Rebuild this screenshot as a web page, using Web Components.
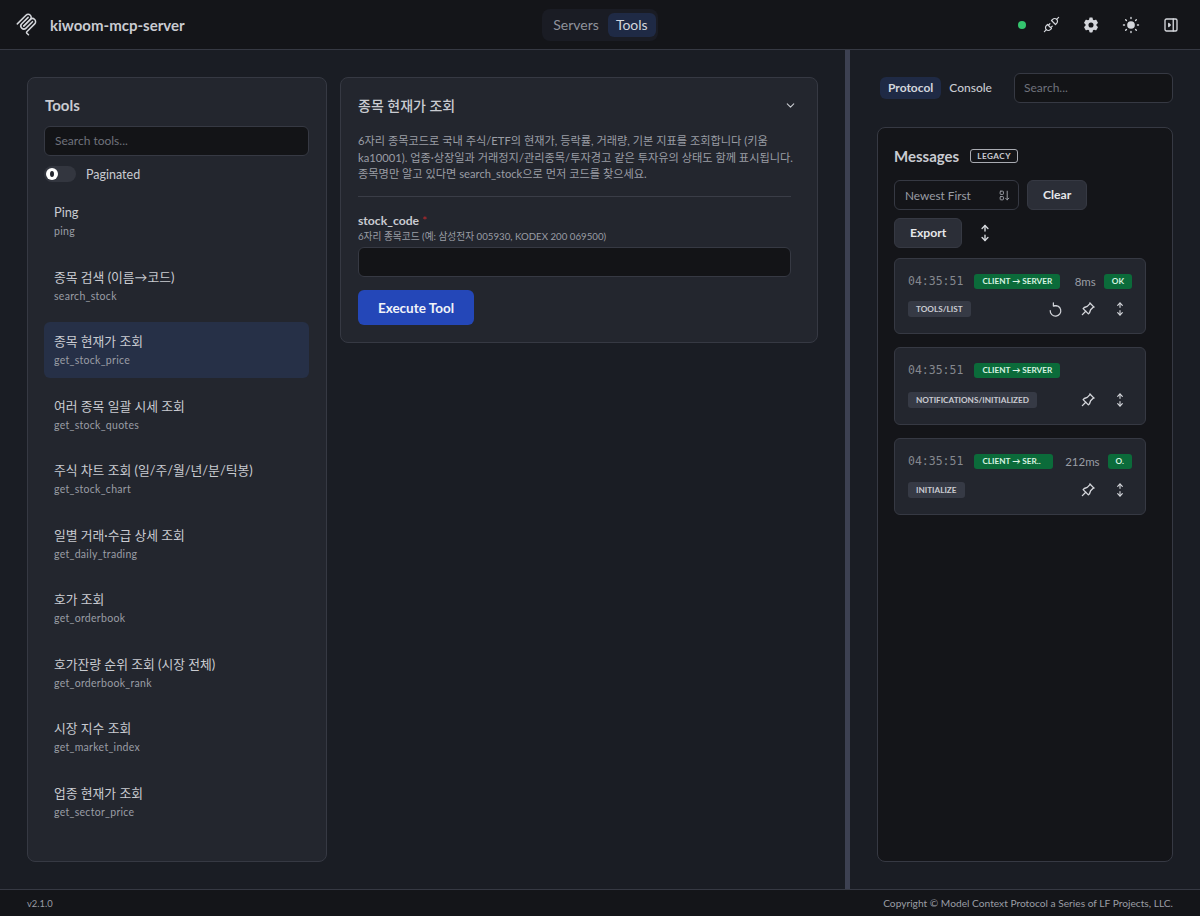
<!doctype html>
<html lang="ko">
<head>
<meta charset="utf-8">
<title>kiwoom-mcp-server</title>
<style>
  html, body { margin: 0; height: 100%; background: #1a1d24; }
  body {
    font-family: Lato, "Noto Sans CJK KR", sans-serif;
    color: #c9cbd1;
    overflow: hidden;
  }
</style>
</head>
<body>
<app-shell>
  <app-header slot="header"></app-header>

  <tools-panel slot="tools">
    <tool-item code="ping">Ping</tool-item>
    <tool-item code="search_stock">종목 검색 (이름→코드)</tool-item>
    <tool-item code="get_stock_price" selected>종목 현재가 조회</tool-item>
    <tool-item code="get_stock_quotes">여러 종목 일괄 시세 조회</tool-item>
    <tool-item code="get_stock_chart">주식 차트 조회 (일/주/월/년/분/틱봉)</tool-item>
    <tool-item code="get_daily_trading">일별 거래·수급 상세 조회</tool-item>
    <tool-item code="get_orderbook">호가 조회</tool-item>
    <tool-item code="get_orderbook_rank">호가잔량 순위 조회 (시장 전체)</tool-item>
    <tool-item code="get_market_index">시장 지수 조회</tool-item>
    <tool-item code="get_sector_price">업종 현재가 조회</tool-item>
  </tools-panel>

  <tool-detail slot="detail"></tool-detail>

  <protocol-panel slot="side">
    <message-card style="--row-gap:12px" time="04:35:51" direction="CLIENT → SERVER" ms="8ms" status="OK" method="TOOLS/LIST" replay></message-card>
    <message-card style="--row-gap:14px" time="04:35:51" direction="CLIENT → SERVER" method="NOTIFICATIONS/INITIALIZED"></message-card>
    <message-card style="--row-gap:13px;--dir-w:79px" time="04:35:51" direction="CLIENT → SER.." ms="212ms" status="O." method="INITIALIZE"></message-card>
  </protocol-panel>

  <app-footer slot="footer"></app-footer>
</app-shell>

<script>
const ICONS = {
  plug: '<path d="M7 12l5 5l-1.5 1.5a3.536 3.536 0 1 1 -5 -5l1.5 -1.5z"/><path d="M17 12l-5 -5l1.5 -1.5a3.536 3.536 0 1 1 5 5l-1.5 1.5z"/><path d="M3 21l2.5 -2.5"/><path d="M18.5 5.5l2.5 -2.5"/><path d="M10 11l-2 2"/><path d="M13 14l-2 2"/>',
  gear: '<path fill="currentColor" stroke="none" fill-rule="evenodd" d="M14.1 2.6l.5 2.3c.5.2 1 .5 1.4.8l2.2-.7c.4-.1.8 0 1 .4l1.9 3.2c.2.4.1.8-.2 1.1l-1.7 1.5c.1.5.1 1.1 0 1.6l1.7 1.5c.3.3.4.7.2 1.1l-1.9 3.2c-.2.4-.6.5-1 .4l-2.2-.7c-.4.3-.9.6-1.4.8l-.5 2.3c-.1.4-.4.6-.8.6h-2.6c-.4 0-.7-.2-.8-.6l-.5-2.3c-.5-.2-1-.5-1.4-.8l-2.2.7c-.4.1-.8 0-1-.4l-1.9-3.2c-.2-.4-.1-.8.2-1.1l1.7-1.5c-.1-.5-.1-1.1 0-1.6l-1.7-1.5c-.3-.3-.4-.7-.2-1.1l1.9-3.2c.2-.4.6-.5 1-.4l2.2.7c.4-.3.9-.6 1.4-.8l.5-2.3c.1-.4.4-.6.8-.6h2.6c.4 0 .7.2.8.6zM12 8.6a3.4 3.4 0 1 0 0 6.8a3.4 3.4 0 0 0 0-6.8z"/>',
  sun: '<circle cx="12" cy="12" r="4.6" fill="currentColor" stroke="none"/><path d="M3 12h1.2M19.8 12h1.2M12 3v1.2M12 19.8v1.2M5.6 5.6l.9.9M18.4 5.6l-.9.9M17.5 17.5l.9.9M6.5 17.5l-.9.9"/>',
  sidebar: '<rect x="4" y="4" width="16" height="16" rx="2"/><path d="M15 4v16"/><path d="M9 10l2 2l-2 2z" fill="currentColor"/>',
  chevron: '<path d="M6 9l6 6l6 -6"/>',
  sort: '<rect x="4" y="4" width="6" height="6" rx="1.2"/><rect x="4" y="14" width="6" height="6" rx="1.2"/><path d="M17 4v16"/><path d="M14 17l3 3l3 -3"/>',
  fold: '<path d="M12 3v6.5"/><path d="M8.5 6.5l3.5 -3.5l3.5 3.5"/><path d="M12 14.5v6.5"/><path d="M8.5 17.5l3.5 3.5l3.5 -3.5"/>',
  replay: '<path d="M9.2 6.9A7.5 7.5 0 1 1 4.5 13.5"/><path d="M9 2.5v4.5h4.5"/>',
  pin: '<path d="M15 4.5l-4 4l-4 1.5l-1.5 1.5l7 7l1.5 -1.5l1.5 -4l4 -4"/><path d="M9 15l-4.5 4.5"/><path d="M14.5 4l5.5 5.5"/>'
};

class UiIcon extends HTMLElement {
  connectedCallback() {
    const size = this.getAttribute('size') || 20;
    const sw = this.getAttribute('stroke') || 2;
    this.attachShadow({ mode: 'open' }).innerHTML = `
      <style>:host{display:inline-flex;flex:none;align-items:center;justify-content:center}svg{display:block}</style>
      <svg width="${size}" height="${size}" viewBox="0 0 24 24" fill="none" stroke="currentColor" stroke-width="${sw}" stroke-linecap="round" stroke-linejoin="round">${ICONS[this.getAttribute('name')]}</svg>`;
  }
}
customElements.define('ui-icon', UiIcon);

class AppShell extends HTMLElement {
  constructor() {
    super();
    this.attachShadow({ mode: 'open' }).innerHTML = `
      <style>
        :host{display:grid;grid-template-rows:50px 1fr 27px;height:916px;width:1200px}
        main{display:grid;grid-template-columns:845px 5px 350px;min-height:0}
        #left{display:grid;grid-template-columns:300px 478px;column-gap:13px;padding:27px;box-sizing:border-box;align-items:start;min-height:0;grid-template-rows:785px}
        #bar{background:#3d4152}
      </style>
      <slot name="header"></slot>
      <main>
        <div id="left"><slot name="tools"></slot><slot name="detail"></slot></div>
        <div id="bar"></div>
        <slot name="side"></slot>
      </main>
      <slot name="footer"></slot>`;
  }
}
customElements.define('app-shell', AppShell);

class AppHeader extends HTMLElement {
  constructor() {
    super();
    this.attachShadow({ mode: 'open' }).innerHTML = `
      <style>
        :host{display:grid;grid-template-columns:1fr auto 1fr;align-items:center;background:#141519;border-bottom:1px solid #363943;box-sizing:border-box;padding:0 19px}
        #brand{display:flex;align-items:center;gap:12px;margin-left:-4px;font-size:15px;font-weight:700;color:#c9cbd1}
        nav{display:flex;background:#1a1c24;border-radius:8px;padding:4px 2px 4px 3px;font-size:14px}
        nav span{padding:0 8px;height:24px;line-height:24px;border-radius:6px;color:#8f929b}
        nav span.on{background:#1f2a45;color:#d3d6dd;margin-left:1px}
        #actions{display:flex;justify-self:end;align-items:center;color:#d4d6db}
        #dot{width:8px;height:8px;border-radius:50%;background:#34c46e;margin-right:15px}
        #actions ui-icon{width:20px;margin-left:20px}
        #actions ui-icon:first-of-type{margin-left:0}
      </style>
      <div id="brand">
        <svg width="23" height="23" viewBox="0 0 180 180" fill="none" stroke="#d4d6db" stroke-width="12" stroke-linecap="round">
          <path d="M18 84.8528L85.8822 16.9706C95.2548 7.59798 110.451 7.59798 119.823 16.9706C129.196 26.3431 129.196 41.5391 119.823 50.9117L68.5581 102.177"/>
          <path d="M69.2652 101.47L119.823 50.9117C129.196 41.5391 144.392 41.5391 153.765 50.9117L154.118 51.2652C163.491 60.6378 163.491 75.8338 154.118 85.2063L92.7248 146.6C89.6006 149.724 89.6006 154.789 92.7248 157.913L105.331 170.52"/>
          <path d="M102.853 33.9411L52.6482 84.1457C43.2756 93.5183 43.2756 108.714 52.6482 118.087C62.0208 127.459 77.2167 127.459 86.5893 118.087L136.794 67.8822"/>
        </svg>
        <span>kiwoom-mcp-server</span>
      </div>
      <nav><span>Servers</span><span class="on">Tools</span></nav>
      <div id="actions">
        <div id="dot"></div>
        <ui-icon name="plug" size="19" stroke="1.5"></ui-icon>
        <ui-icon name="gear" size="18"></ui-icon>
        <ui-icon name="sun" size="20" stroke="1.7"></ui-icon>
        <ui-icon name="sidebar" size="18" stroke="1.8"></ui-icon>
      </div>`;
  }
}
customElements.define('app-header', AppHeader);

class ToolsPanel extends HTMLElement {
  constructor() {
    super();
    this.attachShadow({ mode: 'open' }).innerHTML = `
      <style>
        :host{display:block;height:785px;box-sizing:border-box;background:#23262e;border:1px solid #363943;border-radius:8px;padding:16px 17px 16px 16px}
        h2{margin:0 0 10px;font-size:15px;line-height:22px;font-weight:700;color:#c9cbd1;padding-left:1px}
        #search{box-sizing:border-box;height:30px;background:#131417;border:1px solid #363943;border-radius:6px;padding:0 10px;line-height:28px;font-size:12px;color:#6f727b}
        #toggle{display:flex;align-items:center;gap:10px;margin:10px 0 11px;font-size:12.5px;height:16px;color:#c9cbd1}
        #track{width:32px;height:16px;border-radius:8px;background:#33363f;position:relative}
        #thumb{position:absolute;left:2px;top:2px;width:12px;height:12px;border-radius:50%;background:#fff;box-sizing:border-box;display:flex;align-items:center;justify-content:center}
        #thumb::after{content:"";width:4px;height:6px;border-radius:50%;background:#23262e}
        #list{display:flex;flex-direction:column;gap:8.5px}
      </style>
      <h2>Tools</h2>
      <div id="search">Search tools...</div>
      <div id="toggle"><div id="track"><div id="thumb"></div></div><span>Paginated</span></div>
      <div id="list"><slot></slot></div>`;
  }
}
customElements.define('tools-panel', ToolsPanel);

class ToolItem extends HTMLElement {
  constructor() {
    super();
    this.attachShadow({ mode: 'open' }).innerHTML = `
      <style>
        :host{display:block;height:56px;box-sizing:border-box;border-radius:6px;padding:10px}
        :host([selected]){background:#263047}
        #name{font-size:12.8px;line-height:19px;color:#c9cbd1}
        #code{font-size:10.5px;letter-spacing:.3px;line-height:14px;margin-top:2px;color:#9a9da5}
      </style>
      <div id="name"><slot></slot></div>
      <div id="code"></div>`;
  }
  connectedCallback() {
    this.shadowRoot.querySelector('#code').textContent = this.getAttribute('code');
  }
}
customElements.define('tool-item', ToolItem);

class ToolDetail extends HTMLElement {
  constructor() {
    super();
    this.attachShadow({ mode: 'open' }).innerHTML = `
      <style>
        :host{display:block;box-sizing:border-box;height:266px;background:#23262e;border:1px solid #363943;border-radius:8px;padding:16px 26px 16px 17px}
        #head{display:flex;justify-content:space-between;align-items:center;height:22px;color:#c9cbd1}
        #head ui-icon{margin-right:-6px}
        h2{margin:0;font-size:14px;font-weight:500}
        p{margin:17px 0 0;font-size:11.2px;line-height:16.7px;color:#9a9da5;height:51px;white-space:nowrap}
        hr{border:0;border-top:1px solid #3a3d47;margin:12px 0 0}
        label{display:block;margin-top:16px;font-size:12.2px;line-height:15px;font-weight:700;color:#c9cbd1}
        label b{color:#b3282d;font-weight:400}
        small{display:block;margin-top:1px;font-size:9.7px;line-height:14px;color:#9a9da5}
        #input{height:30px;margin-top:4px;box-sizing:border-box;background:#131417;border:1px solid #363943;border-radius:6px}
        button{display:block;margin-top:13px;width:116px;height:35px;border:0;border-radius:6px;background:#2447b8;color:#f1f3f8;font:700 13.5px Lato,sans-serif}
      </style>
      <div id="head"><h2>종목 현재가 조회</h2><ui-icon name="chevron" size="13"></ui-icon></div>
      <p>6자리 종목코드로 국내 주식/ETF의 현재가, 등락률, 거래량, 기본 지표를 조회합니다 (키움<br>ka10001). 업종·상장일과 거래정지/관리종목/투자경고 같은 투자유의 상태도 함께 표시됩니다.<br>종목명만 알고 있다면 search_stock으로 먼저 코드를 찾으세요.</p>
      <hr>
      <label>stock_code <b>*</b></label>
      <small>6자리 종목코드 (예: 삼성전자 005930, KODEX 200 069500)</small>
      <div id="input"></div>
      <button>Execute Tool</button>`;
  }
}
customElements.define('tool-detail', ToolDetail);

class ProtocolPanel extends HTMLElement {
  constructor() {
    super();
    this.attachShadow({ mode: 'open' }).innerHTML = `
      <style>
        :host{display:block;box-sizing:border-box;padding:23px 27px 27px;height:839px}
        #top{display:flex;align-items:center;height:30px;padding-left:3px;font-size:12px;color:#c9cbd1}
        #top span{height:22px;line-height:22px;padding:0 8px;border-radius:6px;font-weight:500}
        #top span.on{background:#1f2a45;color:#d3d6dd;font-weight:700}
        #search{margin-left:auto;box-sizing:border-box;width:159px;height:30px;background:#131417;border:1px solid #363943;border-radius:6px;padding:0 9px;line-height:28px;font-size:12px;color:#6f727b}
        #box{box-sizing:border-box;margin-top:24px;height:735px;background:#141519;border:1px solid #363943;border-radius:8px;padding:16px}
        #title{display:flex;align-items:center;gap:11px;height:24px}
        h2{margin:0;font-size:15px;font-weight:700;line-height:22px;color:#c9cbd1}
        #legacy{border:1px solid #a9abb2;border-radius:3px;font-size:8.2px;line-height:12px;font-weight:700;letter-spacing:.5px;padding:0 6px;color:#c9cbd1}
        .row{display:flex;align-items:center;gap:8px;margin-top:8px}
        #select{box-sizing:border-box;width:125px;height:30px;background:#141519;border:1px solid #363943;border-radius:6px;padding:0 7px 0 10px;display:flex;align-items:center;justify-content:space-between;font-size:11.8px;color:#9a9da5}
        .btn{box-sizing:border-box;height:30px;line-height:28px;padding:0 15px;border:1px solid #363943;border-radius:6px;background:#2b2e37;font-size:12.2px;font-weight:700;color:#e6e7ea}
        #list{display:flex;flex-direction:column;gap:13px;margin-top:10px;width:252px}
      </style>
      <div id="top">
        <span class="on">Protocol</span><span>Console</span>
        <div id="search">Search...</div>
      </div>
      <div id="box">
        <div id="title"><h2>Messages</h2><div id="legacy">LEGACY</div></div>
        <div class="row" style="margin-top:12px">
          <div id="select">Newest First<ui-icon name="sort" size="13" stroke="1.8"></ui-icon></div>
          <div class="btn">Clear</div>
        </div>
        <div class="row" style="gap:13px">
          <div class="btn">Export</div>
          <ui-icon name="fold" size="20" stroke="1.7" style="color:#d4d6db"></ui-icon>
        </div>
        <div id="list"><slot></slot></div>
      </div>`;
  }
}
customElements.define('protocol-panel', ProtocolPanel);

class MessageCard extends HTMLElement {
  connectedCallback() {
    const a = n => this.getAttribute(n);
    const ms = a('ms') ? `<span id="ms">${a('ms')}</span><span class="badge">${a('status')}</span>` : '';
    const replay = this.hasAttribute('replay') ? '<ui-icon name="replay" size="17" stroke="1.7"></ui-icon>' : '';
    this.attachShadow({ mode: 'open' }).innerHTML = `
      <style>
        :host{display:block;box-sizing:border-box;background:#23262e;border:1px solid #363943;border-radius:6px;padding:14px 13px 16px}
        .row{display:flex;align-items:center;height:16px}
        .row + .row{margin-top:var(--row-gap,12px)}
        #time{font:11.5px "DejaVu Sans Mono",monospace;color:#85888f;margin-right:11px}
        .badge{box-sizing:border-box;height:15px;line-height:15px;padding:0 8px;border-radius:3px;background:#0b6b3a;color:#d8f3e2;font-size:8.2px;font-weight:700;white-space:nowrap}
        #dir{min-width:var(--dir-w,0)}
        #ms{margin-left:auto;margin-right:8px;font-size:11.5px;color:#9a9da5}
        #method{height:16px;line-height:16px;padding:0 8px;border-radius:3px;background:#363a45;color:#c9cbd1;font-size:8.2px;font-weight:700;white-space:nowrap}
        #icons{margin-left:auto;margin-right:4px;display:flex;gap:15px;color:#d4d6db}
      </style>
      <div class="row"><span id="time">${a('time')}</span><span class="badge" id="dir">${a('direction')}</span>${ms}</div>
      <div class="row"><span id="method">${a('method')}</span><div id="icons">${replay}<ui-icon name="pin" size="18" stroke="1.8"></ui-icon><ui-icon name="fold" size="16" stroke="1.7"></ui-icon></div></div>`;
  }
}
customElements.define('message-card', MessageCard);

class AppFooter extends HTMLElement {
  constructor() {
    super();
    this.attachShadow({ mode: 'open' }).innerHTML = `
      <style>
        :host{display:flex;justify-content:space-between;align-items:center;box-sizing:border-box;background:#141519;border-top:1px solid #363943;padding:0 27px;font-size:10.2px;color:#9a9da5}
        #ver{font-size:9.4px}
      </style>
      <span id="ver">v2.1.0</span>
      <span>Copyright © Model Context Protocol a Series of LF Projects, LLC.</span>`;
  }
}
customElements.define('app-footer', AppFooter);
</script>
</body>
</html>
